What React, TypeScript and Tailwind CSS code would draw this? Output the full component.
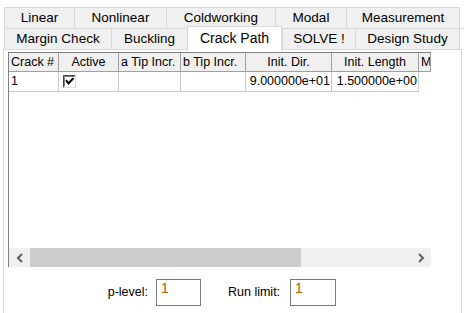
import React from "react";

const row1 = [
  { label: "Linear", w: "w-[70px]" },
  { label: "Nonlinear", w: "w-[92px]" },
  { label: "Coldworking", w: "w-[109px]" },
  { label: "Modal", w: "w-[71px]" },
  { label: "Measurement", w: "w-[114px]" },
];

const row2 = [
  { label: "Margin Check", w: "w-[107px]", sel: false },
  { label: "Buckling", w: "w-[76px]", sel: false },
  { label: "Crack Path", w: "w-[95px]", sel: true },
  { label: "SOLVE !", w: "w-[73px]", sel: false },
  { label: "Design Study", w: "w-[105px]", sel: false },
];

const headers = [
  { label: "Crack #", align: "justify-start pl-[2px]" },
  { label: "Active", align: "justify-center" },
  { label: "a Tip Incr.", align: "justify-start pl-[2px]" },
  { label: "b Tip Incr.", align: "justify-start pl-[2px]" },
  { label: "Init. Dir.", align: "justify-center" },
  { label: "Init. Length", align: "justify-center" },
  { label: "M", align: "justify-start pl-[2px]" },
];

function Check() {
  return (
    <svg width="13" height="13" viewBox="0 0 13 13">
      <rect x="0" y="0" width="13" height="13" fill="#fff" />
      <path d="M0.5 12.5 V0.5 H12.5" stroke="#404040" strokeWidth="1" fill="none" />
      <path d="M1.5 11.5 V1.5 H11.5" stroke="#808080" strokeWidth="1" fill="none" />
      <path d="M0.5 12.5 H12.5 V0.5" stroke="#e0e0e0" strokeWidth="1" fill="none" />
      <path d="M3 5 L5.5 8.5 L10.5 3" stroke="#000" strokeWidth="2" fill="none" />
    </svg>
  );
}

export default function App() {
  return (
    <div
      className="w-[464px] h-[313px] bg-white overflow-hidden text-black"
      style={{ fontFamily: '"Liberation Sans", Arial, sans-serif' }}
    >
      <div className="pt-[7px] pl-[4px]">
        <div className="flex h-[21px] text-[13.5px]">
          {row1.map((t, i) => (
            <div
              key={t.label}
              className={`${t.w} h-full bg-[#f0f0f0] border-t border-l border-[#d9d9d9] ${
                i === row1.length - 1 ? "border-r" : ""
              } flex items-center justify-center leading-none`}
            >
              {t.label}
            </div>
          ))}
        </div>
        <div className="flex h-[21px] text-[13.5px] border-t border-[#d9d9d9]">
          {row2.map((t, i) =>
            t.sel ? (
              <div
                key={t.label}
                className={`${t.w} relative -top-[3px] h-[25px] z-10 bg-white border-t border-l border-r border-[#d9d9d9] flex items-center justify-center leading-none text-[14px] pb-[3px]`}
              >
                {t.label}
              </div>
            ) : (
              <div
                key={t.label}
                className={`${t.w} h-full bg-[#f0f0f0] border-l border-[#d9d9d9] ${
                  i === row2.length - 1 ? "border-r" : ""
                } flex items-center justify-center leading-none`}
              >
                {t.label}
              </div>
            )
          )}
        </div>
      </div>
      <div className="ml-[3px] w-[459px] h-[280px] border border-[#d9d9d9] pt-[2px] pl-[4px]">
        <div className="w-[423px] h-[215px] border-l border-t border-[#828282] flex flex-col bg-white">
          <div className="flex-1 overflow-hidden text-[12.5px]">
            <div className="grid grid-cols-[50px_60px_62px_65px_86px_87px_12px] w-[422px] h-[19px]">
              {headers.map((h) => (
                <div
                  key={h.label}
                  className={`h-full bg-[#f0f0f0] border-r border-b border-[#a0a0a0] flex items-center ${h.align} whitespace-nowrap overflow-hidden leading-none`}
                >
                  {h.label}
                </div>
              ))}
            </div>
            <div className="grid grid-cols-[50px_60px_62px_65px_86px_87px_12px] w-[422px] h-[20px]">
              <div className="border-r border-b border-[#c8c8c8] flex items-center pl-[2px] leading-none">1</div>
              <div className="border-r border-b border-[#c8c8c8] flex items-center pl-[4px]">
                <Check />
              </div>
              <div className="border-r border-b border-[#c8c8c8]" />
              <div className="border-r border-b border-[#c8c8c8]" />
              <div className="border-r border-b border-[#c8c8c8] flex items-center justify-end pr-[1px] leading-none whitespace-nowrap">
                9.000000e+01
              </div>
              <div className="border-r border-b border-[#c8c8c8] flex items-center justify-end pr-[1px] leading-none whitespace-nowrap">
                1.500000e+00
              </div>
              <div />
            </div>
          </div>
          <div className="h-[19px] flex bg-[#f0f0f0]">
            <div className="w-[21px] h-full flex items-center justify-center">
              <svg width="8" height="10" viewBox="0 0 8 10">
                <path d="M6 1 L2 5 L6 9" stroke="#606060" strokeWidth="2" fill="none" />
              </svg>
            </div>
            <div className="w-[271px] h-full bg-[#cdcdcd]" />
            <div className="flex-1" />
            <div className="w-[21px] h-full flex items-center justify-center">
              <svg width="8" height="10" viewBox="0 0 8 10">
                <path d="M2 1 L6 5 L2 9" stroke="#606060" strokeWidth="2" fill="none" />
              </svg>
            </div>
          </div>
        </div>
        <div className="flex items-center mt-[12px] text-[12.5px]">
          <div className="w-[148px] text-right pr-[8px]">p-level:</div>
          <div
            className="w-[45px] h-[27px] border border-[#7a7a7a] text-[14px] pl-[4px] leading-[16px]"
            style={{ color: "#b85800" }}
          >
            1
          </div>
          <div className="ml-[27px] w-[62px]">Run limit:</div>
          <div
            className="w-[46px] h-[27px] border border-[#7a7a7a] text-[14px] pl-[4px] leading-[16px]"
            style={{ color: "#b85800" }}
          >
            1
          </div>
        </div>
      </div>
    </div>
  );
}
